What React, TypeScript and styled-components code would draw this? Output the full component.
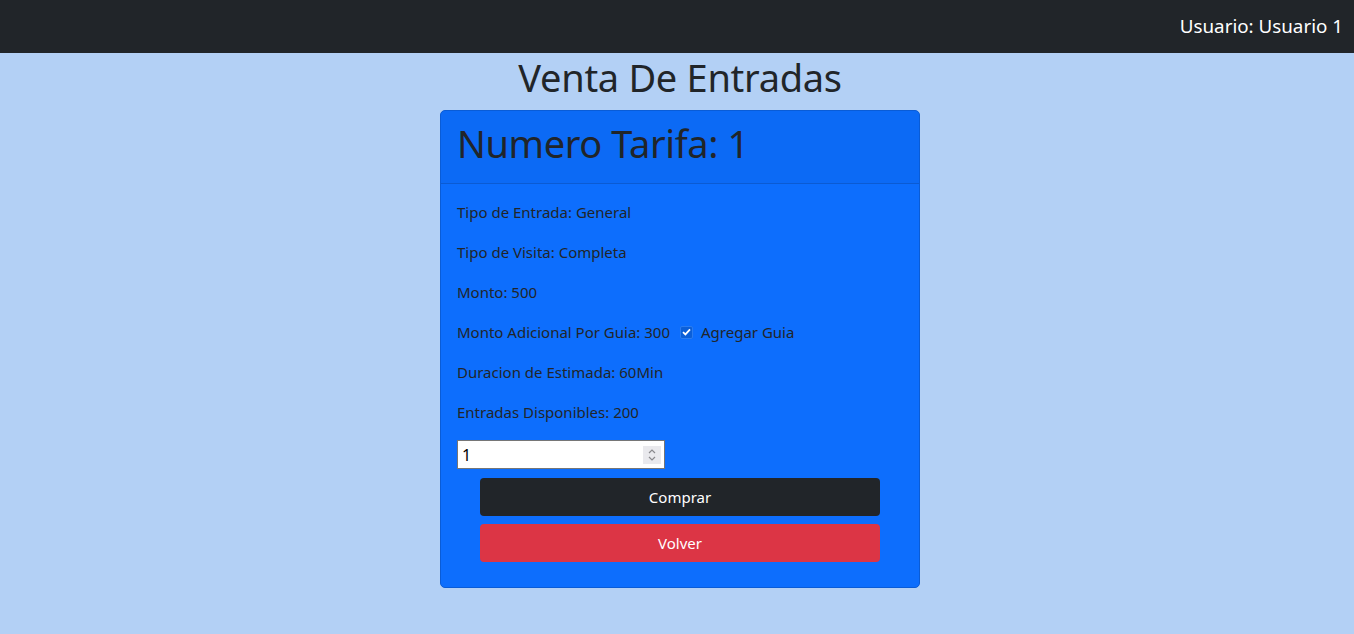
import React from "react";
import styled, { createGlobalStyle } from "styled-components";

const Global = createGlobalStyle`
  html, body { margin: 0; padding: 0; }
  body {
    background: #b3d0f5;
    font-family: "Noto Sans", "Open Sans", sans-serif;
    color: #212529;
    font-size: 16px;
    line-height: 1.5;
  }
  * { box-sizing: border-box; }
`;

const Navbar = styled.nav`
  height: 53px;
  background: #212529;
  display: flex;
  align-items: center;
  justify-content: flex-end;
  padding: 0 11px 0 0;
`;

const NavUser = styled.span`
  color: #ffffff;
  font-size: 18.8px;
`;

const Main = styled.main`
  display: flex;
  flex-direction: column;
  align-items: center;
  padding-left: 6px;
`;

const PageTitle = styled.h1`
  margin: 0 0 9px;
  font-size: 38px;
  font-weight: 400;
  line-height: 48px;
  letter-spacing: -0.3px;
`;

const Card = styled.section`
  width: 480px;
  background: #0d6efd;
  border: 1px solid #0a5cd6;
  border-radius: 5px;
  overflow: hidden;
`;

const CardHeader = styled.header`
  padding: 8px 16px;
  background: rgba(0, 0, 0, 0.03);
  border-bottom: 1px solid #0b5bd3;
`;

const CardTitle = styled.h2`
  margin: 0 0 8px;
  font-size: 38px;
  font-weight: 400;
  line-height: 48px;
  letter-spacing: -0.4px;
`;

const CardBody = styled.div`
  padding: 16px 16px 17px;
  display: flex;
  flex-direction: column;
`;

const Line = styled.p`
  margin: 0 0 16px;
  font-size: 15px;
  line-height: 24px;
  display: flex;
  align-items: center;
`;

const CheckBox = styled.span`
  display: inline-flex;
  align-items: center;
  justify-content: center;
  width: 13px;
  height: 13px;
  margin: 0 8px 0 10px;
  background: #0b5fd8;
  border: 1px solid #2a7cf0;
  border-radius: 2px;
`;

const NumberInput = styled.div`
  width: 208px;
  height: 29px;
  background: #ffffff;
  border: 1px solid #767676;
  display: flex;
  align-items: center;
  justify-content: space-between;
  padding: 0 3px 0 4px;
  margin-bottom: 9px;
`;

const InputValue = styled.span`
  font-size: 16px;
  color: #000;
`;

const Spinner = styled.span`
  width: 18px;
  height: 18px;
  background: #e9e9ed;
  display: flex;
  align-items: center;
  justify-content: center;
`;

const Button = styled.button<{ $bg: string }>`
  align-self: center;
  width: 400px;
  height: 38px;
  border: none;
  border-radius: 4px;
  background: ${(p) => p.$bg};
  color: #ffffff;
  font-family: "Noto Sans", "Open Sans", sans-serif;
  font-size: 15px;
  line-height: 24px;
  margin-bottom: 8px;
`;

export default function App() {
  return (
    <>
      <Global />
      <Navbar>
        <NavUser>Usuario: Usuario 1</NavUser>
      </Navbar>
      <Main>
        <PageTitle>Venta De Entradas</PageTitle>
        <Card>
          <CardHeader>
            <CardTitle>Numero Tarifa: 1</CardTitle>
          </CardHeader>
          <CardBody>
            <Line>Tipo de Entrada: General</Line>
            <Line>Tipo de Visita: Completa</Line>
            <Line>Monto: 500</Line>
            <Line>
              Monto Adicional Por Guia: 300
              <CheckBox>
                <svg width="9" height="8" viewBox="0 0 9 8">
                  <path d="M1 4.2 L3.4 6.4 L8 1.4" stroke="#fff" strokeWidth="1.8" fill="none" />
                </svg>
              </CheckBox>
              Agregar Guia
            </Line>
            <Line>Duracion de Estimada: 60Min</Line>
            <Line>Entradas Disponibles: 200</Line>
            <NumberInput>
              <InputValue>1</InputValue>
              <Spinner>
                <svg width="10" height="14" viewBox="0 0 10 14">
                  <path d="M2 5 L5 2 L8 5 M2 9 L5 12 L8 9" stroke="#8a8a8e" strokeWidth="1.2" fill="none" />
                </svg>
              </Spinner>
            </NumberInput>
            <Button $bg="#212529">Comprar</Button>
            <Button $bg="#dc3545">Volver</Button>
          </CardBody>
        </Card>
      </Main>
    </>
  );
}
